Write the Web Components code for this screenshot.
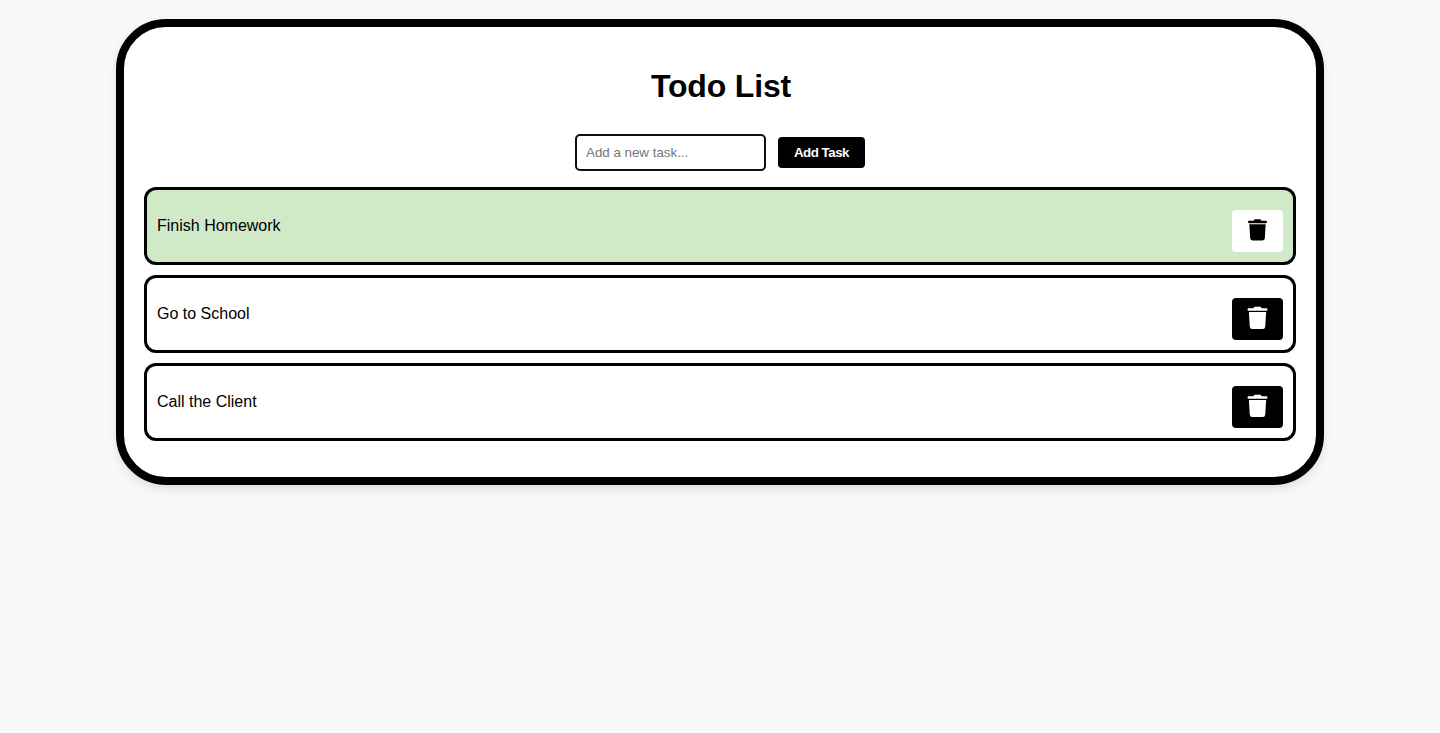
<!DOCTYPE html>
<html lang="en">
<head>
<meta charset="utf-8">
<title>Todo List</title>
<style>
  body { margin: 0; min-height: 100vh; background: #f8f8f8; font-family: "Liberation Sans", Arial, sans-serif; color: #000; }
</style>
</head>
<body>
<todo-app>
  <todo-form slot="form"></todo-form>
  <todo-item done>Finish Homework</todo-item>
  <todo-item>Go to School</todo-item>
  <todo-item>Call the Client</todo-item>
</todo-app>

<template id="app-template">
  <style>
    :host { display: block; padding: 19px 0; }
    main {
      box-sizing: border-box; width: 1208px; height: 466px; margin: 0 auto;
      padding: 41px 20px 20px; background: #fff; border: 8px solid #000;
      border-radius: 50px; box-shadow: 0 4px 8px rgba(0, 0, 0, 0.1);
    }
    h1 { margin: 0; height: 37px; line-height: 37px; font-size: 32px; letter-spacing: -0.15px; text-align: center; padding-left: 2px; }
    .form { margin-top: 29px; }
    .list { display: flex; flex-direction: column; gap: 10px; margin-top: 16px; }
  </style>
  <main>
    <h1>Todo List</h1>
    <div class="form"><slot name="form"></slot></div>
    <div class="list"><slot></slot></div>
  </main>
</template>

<template id="form-template">
  <style>
    :host { display: flex; justify-content: center; align-items: center; gap: 12px; height: 37px; }
    input {
      box-sizing: border-box; width: 191px; height: 37px; margin: 0; padding: 8px 9px;
      border: 2px solid #101014; border-radius: 5px; background: #fff;
      font: 13.333px "Liberation Sans", Arial, sans-serif; outline: none;
    }
    input::placeholder { color: #757575; }
    button {
      width: 87px; height: 31px; margin: 0; padding: 0; border: 0; border-radius: 4px;
      background: #000; color: #fff; font: bold 13.333px "Liberation Sans", Arial, sans-serif; letter-spacing: -0.5px;
    }
  </style>
  <input type="text" placeholder="Add a new task...">
  <button type="button">Add Task</button>
</template>

<template id="item-template">
  <style>
    :host {
      box-sizing: border-box; display: flex; justify-content: space-between; align-items: flex-start;
      height: 78px; padding: 0 10px; border: 3px solid #000; border-radius: 12px; background: #fff;
    }
    :host([done]) { background: #d0eac8; }
    span { margin-top: 27px; font-size: 16px; line-height: 18px; }
    button {
      display: flex; justify-content: center; align-items: flex-start; width: 51px; height: 42px;
      margin: 20px 0 0; padding: 8px 0 0; border: 0; border-radius: 4px; background: #000; color: #fff;
    }
    :host([done]) button { background: #fff; color: #000; }
    svg { display: block; fill: currentColor; }
    :host([done]) svg { transform: scale(0.95); }
  </style>
  <span><slot></slot></span>
  <button type="button" aria-label="Delete">
    <svg width="21" height="24" viewBox="0 0 21 24" aria-hidden="true">
      <path d="M1.6 2.2H6.4Q7 .8 8.2 .8H12.8Q14 .8 14.6 2.2H19.4Q20.5 2.2 20.5 3.4Q20.5 4.8 19.4 4.8H1.6Q.5 4.8 .5 3.4Q.5 2.2 1.6 2.2Z"/>
      <path d="M1.9 6H19.1L18.2 20.8Q18 23 15.8 23H5.2Q3 23 2.8 20.8Z"/>
    </svg>
  </button>
</template>

<script>
  const define = (name, templateId) => customElements.define(name, class extends HTMLElement {
    constructor() {
      super();
      this.attachShadow({ mode: "open" })
        .append(document.getElementById(templateId).content.cloneNode(true));
    }
  });
  define("todo-app", "app-template");
  define("todo-form", "form-template");
  define("todo-item", "item-template");
</script>
</body>
</html>
